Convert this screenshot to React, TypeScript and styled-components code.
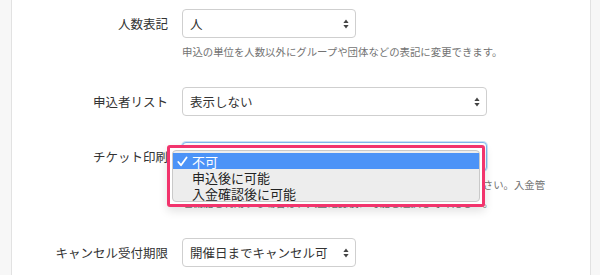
import styled, { createGlobalStyle } from 'styled-components';

const GlobalStyle = createGlobalStyle`
  html, body {
    margin: 0;
    padding: 0;
  }
  body {
    font-family: 'Noto Sans CJK JP', 'Noto Sans', sans-serif;
    background: #f7f7f7;
  }
`;

const Page = styled.div`
  display: flex;
  height: 275px;
  padding: 0 9px 0 11px;
  background: #f7f7f7;
  overflow: hidden;
`;

const Panel = styled.div`
  flex: 1;
  background: #ffffff;
  border-left: 1px solid #e2e2e2;
  border-right: 1px solid #e2e2e2;
  padding-top: 9px;
  display: flex;
  flex-direction: column;
  gap: 26px;
`;

const FormRow = styled.div`
  display: grid;
  grid-template-columns: 156px 1fr;
  column-gap: 14px;
`;

const Label = styled.div`
  text-align: right;
  font-size: 12.5px;
  line-height: 29px;
  color: #333333;
  white-space: nowrap;
`;

const Control = styled.div`
  position: relative;
`;

const SelectBox = styled.div<{ $width: number; $focused?: boolean }>`
  width: ${p => p.$width}px;
  height: 29px;
  box-sizing: border-box;
  padding: 0 6px 0 7px;
  display: flex;
  align-items: center;
  justify-content: space-between;
  background: #fff;
  border: 1px solid ${p => (p.$focused ? '#7fb6ec' : '#cfcfcf')};
  border-radius: 4px;
  box-shadow: ${p => (p.$focused ? '0 0 0 1px rgba(102, 175, 233, 0.35)' : 'none')};
  font-size: 12.5px;
  color: #333;
`;

const Help = styled.div`
  margin-top: 5px;
  font-size: 10.4px;
  line-height: 18px;
  color: #737373;
  white-space: nowrap;
`;

const Highlight = styled.div`
  position: absolute;
  left: -15px;
  top: 3px;
  width: 318px;
  height: 62px;
  box-sizing: border-box;
  border: 3px solid #f2346d;
  border-radius: 3px;
  padding: 2px;
  background: #fff;
  box-shadow: 0 4px 10px rgba(0, 0, 0, 0.12);
  z-index: 2;
`;

const Menu = styled.div`
  height: 100%;
  box-sizing: border-box;
  padding: 2px 0 5px;
  background: #ededed;
  border: 1px solid #c9c9c9;
  border-radius: 4px;
`;

const MenuItem = styled.div<{ $active?: boolean }>`
  display: flex;
  align-items: center;
  height: 16px;
  padding-left: 4px;
  font-size: 13px;
  background: ${p => (p.$active ? '#4c93f7' : 'transparent')};
  color: ${p => (p.$active ? '#ffffff' : '#222222')};
`;

const CheckSlot = styled.span`
  width: 15px;
  display: inline-flex;
  align-items: center;
`;

function Arrows() {
  return (
    <svg width="6" height="10" viewBox="0 0 6 10">
      <path d="M3 0.5 L5.6 4 H0.4 Z" fill="#444" />
      <path d="M0.4 6 H5.6 L3 9.5 Z" fill="#444" />
    </svg>
  );
}

function Check() {
  return (
    <svg width="11" height="11" viewBox="0 0 11 11">
      <path d="M1.3 6 L4 9.2 L9.6 1.4" stroke="#fff" strokeWidth="1.8" fill="none" strokeLinecap="round" strokeLinejoin="round" />
    </svg>
  );
}

const printOptions = ['不可', '申込後に可能', '入金確認後に可能'];

export default function App() {
  return (
    <>
      <GlobalStyle />
      <Page>
        <Panel>
          <FormRow>
            <Label>人数表記</Label>
            <Control>
              <SelectBox $width={174}>
                <span>人</span>
                <Arrows />
              </SelectBox>
              <Help>申込の単位を人数以外にグループや団体などの表記に変更できます。</Help>
            </Control>
          </FormRow>

          <FormRow>
            <Label>申込者リスト</Label>
            <Control>
              <SelectBox $width={305}>
                <span>表示しない</span>
                <Arrows />
              </SelectBox>
            </Control>
          </FormRow>

          <FormRow>
            <Label>チケット印刷</Label>
            <Control>
              <SelectBox $width={305} $focused>
                <span>不可</span>
                <Arrows />
              </SelectBox>
              <Help>
                チケット印刷を可能にする場合は、受付票の項目を設定してください。入金管
                <br />
                理機能を利用する場合は、入金確認後に可能を選択してください。
              </Help>
              <Highlight>
                <Menu>
                  {printOptions.map((o, i) => (
                    <MenuItem key={o} $active={i === 0}>
                      <CheckSlot>{i === 0 && <Check />}</CheckSlot>
                      {o}
                    </MenuItem>
                  ))}
                </Menu>
              </Highlight>
            </Control>
          </FormRow>

          <FormRow>
            <Label>キャンセル受付期限</Label>
            <Control>
              <SelectBox $width={174}>
                <span>開催日までキャンセル可</span>
                <Arrows />
              </SelectBox>
            </Control>
          </FormRow>
        </Panel>
      </Page>
    </>
  );
}
